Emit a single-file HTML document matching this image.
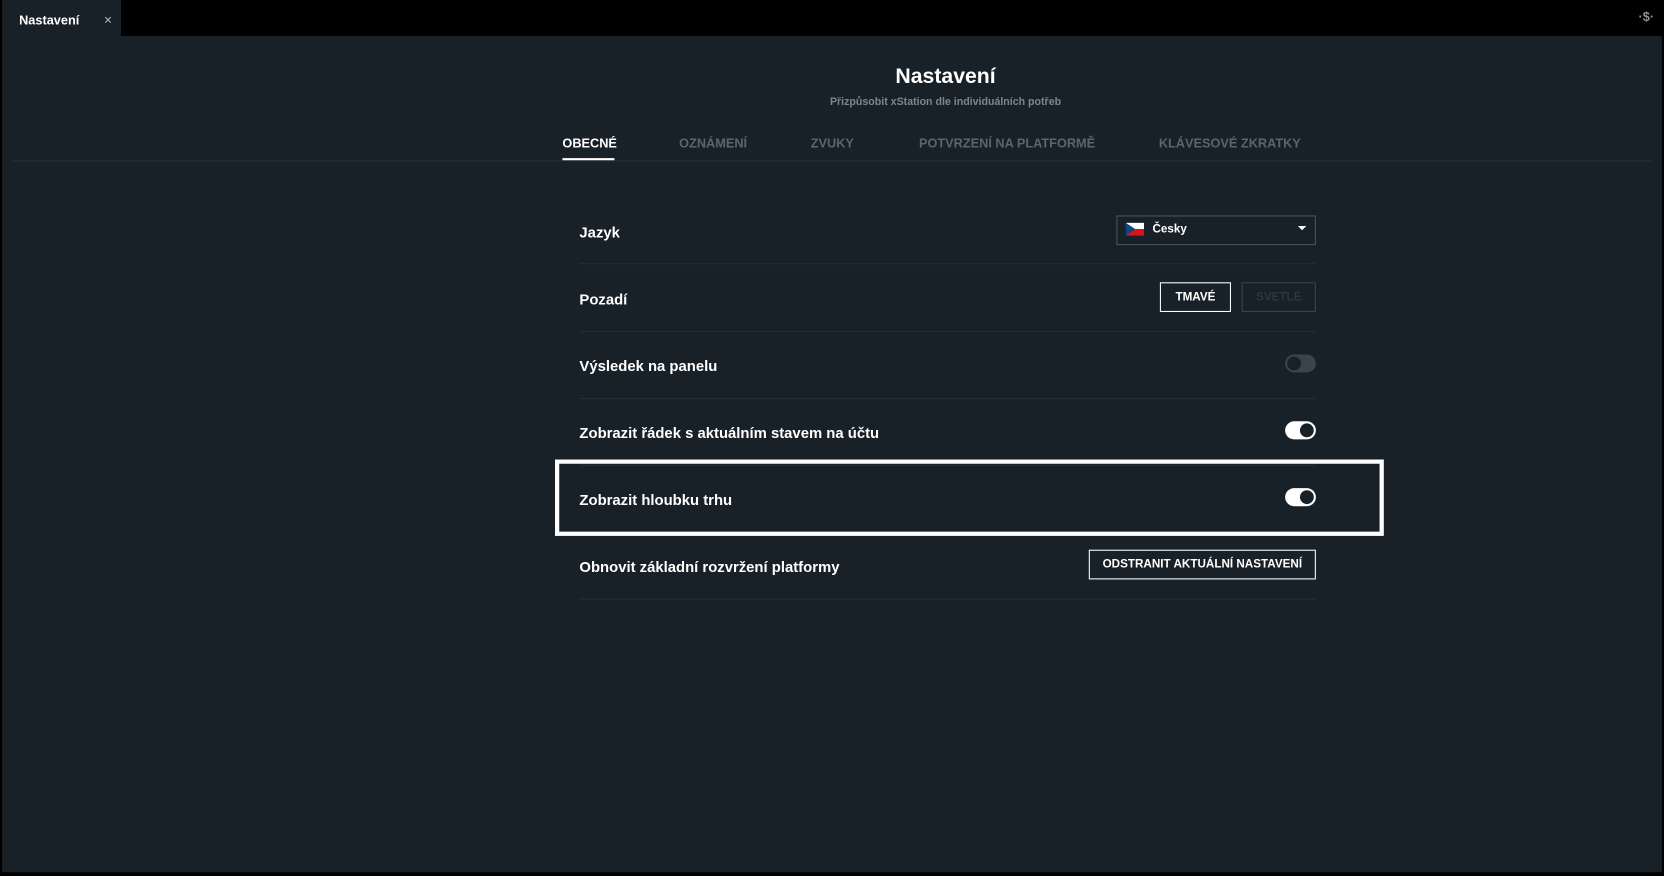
<!DOCTYPE html>
<html><head><meta charset="utf-8"><style>
html,body{margin:0;padding:0;background:#000;width:1664px;height:876px;overflow:hidden}
#w{position:absolute;left:0;top:0;width:1568px;height:825px;transform:scale(1.0612);transform-origin:0 0;font-family:"Liberation Sans Narrow","Liberation Sans",sans-serif;color:#fff}
.a{position:absolute}
.main{left:2px;top:34px;width:1564px;height:788px;background:#182128}
.tab{left:2px;top:0;width:112px;height:34px;background:#182128}
.lbl{position:absolute;left:546px;font-size:14px;font-weight:bold;transform:translateY(-45%)}
.div{position:absolute;left:546px;width:694px;height:1px;background:#242e35}
.tg{position:absolute;left:1211px;width:29px;height:17px;border-radius:9px}
.tg i{position:absolute;top:2px;width:13px;height:13px;border-radius:50%}
.t{position:absolute;top:128px;font-size:12px;font-weight:bold;color:#5b656c}
</style></head><body><div id="w">
<div class="a main"></div>
<div class="a tab"></div>
<div class="a" style="left:18px;top:12px;font-size:12px;font-weight:bold">Nastavení</div>
<div class="a" style="left:98px;top:11px;font-size:13px;color:#bbb">×</div>
<div class="a" style="left:1544px;top:9px;font-size:12px;color:#8a949a;font-weight:bold">·$·</div>
<div class="a" style="left:0;width:1782px;top:61px;text-align:center;font-size:20px;font-weight:bold">Nastavení</div>
<div class="a" style="left:0;width:1782px;top:91px;text-align:center;font-size:10px;color:#7c868c;font-weight:bold">Přizpůsobit xStation dle individuálních potřeb</div>
<div class="t" style="left:530px;color:#fff">OBECNÉ</div>
<div class="t" style="left:640px">OZNÁMENÍ</div>
<div class="t" style="left:764px">ZVUKY</div>
<div class="t" style="left:866px">POTVRZENÍ NA PLATFORMĚ</div>
<div class="t" style="left:1092px">KLÁVESOVÉ ZKRATKY</div>
<div class="a" style="left:12px;top:151px;width:1544px;height:1px;background:#263037"></div>
<div class="a" style="left:530px;top:149px;width:49px;height:2px;background:#fff"></div>

<div class="lbl" style="top:218px">Jazyk</div>
<div class="a" style="left:1052px;top:203px;width:186px;height:26px;border:1px solid #4a545b"></div>
<div class="a" style="left:1061px;top:210px;width:17px;height:12px;background:linear-gradient(#fff 50%,#d7141a 50%)"></div>
<svg class="a" style="left:1061px;top:210px" width="17" height="12"><polygon points="0,0 9,6 0,12" fill="#11457e"/></svg>
<div class="a" style="left:1086px;top:210px;font-size:11px;font-weight:bold">Česky</div>
<svg class="a" style="left:1223px;top:213px" width="8" height="5"><polygon points="0,0 8,0 4,4" fill="#fff"/></svg>
<div class="div" style="top:248px"></div>

<div class="lbl" style="top:281px">Pozadí</div>
<div class="a" style="left:1093px;top:266px;width:65px;height:26px;border:1px solid #fff;font-size:11px;font-weight:bold;text-align:center;line-height:27px">TMAVÉ</div>
<div class="a" style="left:1170px;top:266px;width:68px;height:26px;border:1px solid #3a444b;font-size:11px;font-weight:bold;text-align:center;line-height:27px;color:#2c363d">SVETLÉ</div>
<div class="div" style="top:312px"></div>

<div class="lbl" style="top:344px">Výsledek na panelu</div>
<div class="tg" style="top:334px;background:#3a444b"><i style="left:2px;background:#182128"></i></div>
<div class="div" style="top:375px"></div>

<div class="lbl" style="top:407px">Zobrazit řádek s aktuálním stavem na účtu</div>
<div class="tg" style="top:397px;background:#fff"><i style="left:14px;background:#182128"></i></div>
<div class="div" style="top:438px"></div>

<div class="lbl" style="top:470px">Zobrazit hloubku trhu</div>
<div class="tg" style="top:460px;background:#fff"><i style="left:14px;background:#182128"></i></div>
<div class="a" style="left:523px;top:433px;width:773px;height:64px;border:4px solid #fff"></div>

<div class="lbl" style="top:533px">Obnovit základní rozvržení platformy</div>
<div class="a" style="left:1026px;top:518px;width:212px;height:26px;border:1px solid #fff;font-size:11px;font-weight:bold;text-align:center;line-height:27px">ODSTRANIT AKTUÁLNÍ NASTAVENÍ</div>
<div class="div" style="top:564px"></div>
</div></body></html>
